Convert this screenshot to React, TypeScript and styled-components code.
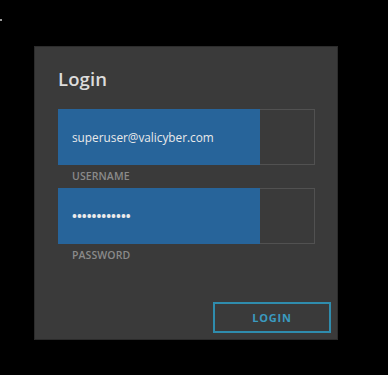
import React from "react";
import styled, { createGlobalStyle } from "styled-components";

const GlobalStyle = createGlobalStyle`
  html, body {
    margin: 0;
    padding: 0;
    background: #000;
  }
  body {
    font-family: "Open Sans", "Liberation Sans", sans-serif;
  }
`;

const Page = styled.div`
  position: relative;
  width: 388px;
  height: 375px;
  padding: 46px 0 0 34px;
  box-sizing: border-box;
`;

const Speck = styled.span`
  position: absolute;
  left: 0;
  top: 19px;
  width: 2px;
  height: 2px;
  background: #9a9a9a;
`;

const Panel = styled.form`
  width: 304px;
  height: 294px;
  box-sizing: border-box;
  background: #3a3a3a;
  border: 1px solid #2c2c2c;
  padding: 19px 6px 6px 23px;
  display: flex;
  flex-direction: column;
`;

const Title = styled.h1`
  margin: 0 0 17px;
  font-size: 18.5px;
  line-height: 26px;
  font-weight: 600;
  color: #dcdcdc;
  letter-spacing: 0.1px;
`;

const FieldBox = styled.div`
  width: 257px;
  height: 56px;
  box-sizing: border-box;
  border: 1px solid #515151;
  display: flex;
`;

const Input = styled.div`
  width: 202px;
  margin: -1px 0 -1px -1px;
  background: #27649a;
  display: flex;
  align-items: center;
  padding: 0 14px;
  box-sizing: border-box;
  color: #eaeaea;
  font-size: 11.8px;
`;

const Value = styled.span<{ $masked?: boolean }>`
  padding: 1px 0;
  font-size: ${(p) => (p.$masked ? "13px" : "inherit")};
  font-weight: ${(p) => (p.$masked ? 700 : 400)};
`;

const Label = styled.label`
  display: block;
  margin: 5px 0 6px 14px;
  font-size: 10.5px;
  line-height: 12px;
  font-weight: 600;
  color: #8a8a8a;
  letter-spacing: 0.1px;
`;

const Button = styled.button`
  margin-top: auto;
  align-self: flex-end;
  width: 118px;
  height: 31px;
  background: transparent;
  border: 2px solid #2f8cad;
  color: #3b9ac0;
  font-family: "Open Sans", "Liberation Sans", sans-serif;
  font-size: 11px;
  font-weight: 700;
  letter-spacing: 0.8px;
  padding: 0;
`;

export default function App() {
  return (
    <>
      <GlobalStyle />
      <Page>
        <Speck />
        <Panel onSubmit={(e) => e.preventDefault()}>
          <Title>Login</Title>
          <FieldBox>
            <Input>
              <Value>superuser@valicyber.com</Value>
            </Input>
          </FieldBox>
          <Label>USERNAME</Label>
          <FieldBox>
            <Input>
              <Value $masked>••••••••••••</Value>
            </Input>
          </FieldBox>
          <Label>PASSWORD</Label>
          <Button type="submit">LOGIN</Button>
        </Panel>
      </Page>
    </>
  );
}
